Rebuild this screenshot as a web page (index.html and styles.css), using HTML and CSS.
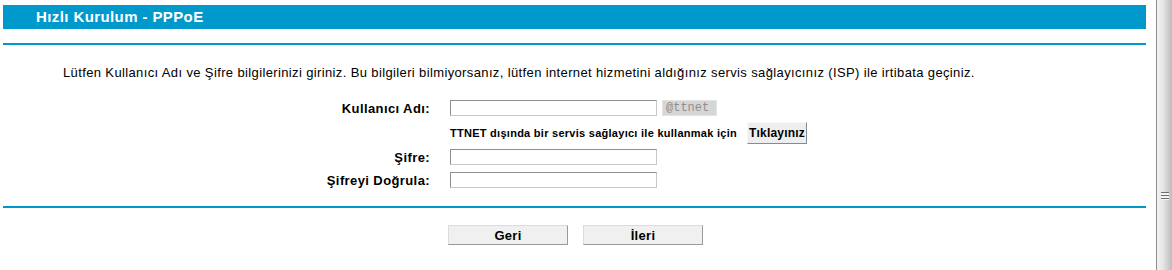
FILE: index.html
```html
<!DOCTYPE html>
<html lang="tr">
<head>
  <meta charset="UTF-8" />
  <title>Hızlı Kurulum - PPPoE</title>
  <link rel="stylesheet" href="styles.css">
</head>
<body>

  <div class="page">
    <div class="main">
      <div class="title-bar">Hızlı Kurulum - PPPoE</div>
      <div class="rule"></div>

      <p class="intro">Lütfen Kullanıcı Adı ve Şifre bilgilerinizi giriniz. Bu bilgileri bilmiyorsanız, lütfen internet hizmetini aldığınız servis sağlayıcınız (ISP) ile irtibata geçiniz.</p>

      <div class="form">
        <label class="label row-user">Kullanıcı Adı:</label>
        <div class="field row-user">
          <input class="text-input" type="text">
          <span class="suffix">@ttnet</span>
        </div>

        <div class="field row-isp">
          <span class="isp-note">TTNET dışında bir servis sağlayıcı ile kullanmak için</span>
          <button class="small-btn">Tıklayınız</button>
        </div>

        <label class="label row-pass">Şifre:</label>
        <div class="field row-pass">
          <input class="text-input" type="password">
        </div>

        <label class="label row-confirm">Şifreyi Doğrula:</label>
        <div class="field row-confirm">
          <input class="text-input" type="password">
        </div>
      </div>

      <div class="rule rule-bottom"></div>

      <div class="nav-buttons">
        <button class="nav-btn">Geri</button>
        <button class="nav-btn">İleri</button>
      </div>
    </div>

    <div class="scrollbar">
      <div class="grip"></div>
    </div>
  </div>

</body>
</html>
```

FILE: styles.css
```css
* {
  box-sizing: border-box;
}

body {
  margin: 0;
  padding: 0;
  height: 270px;
  overflow: hidden;
  background: #ffffff;
  font-family: 'Liberation Sans', Arial, sans-serif;
  color: #000000;
}

.page {
  display: flex;
  height: 270px;
}

.main {
  flex: 1;
  padding: 5px 10px 0 3px;
}

.title-bar {
  height: 24px;
  background: #0099cc;
  color: #ffffff;
  font-size: 15px;
  font-weight: bold;
  letter-spacing: 0.4px;
  line-height: 23px;
  padding-left: 33px;
}

.rule {
  height: 2px;
  margin-top: 14px;
  background: #0099cc;
}

.intro {
  margin: 21px 0 0 60px;
  font-size: 13px;
  letter-spacing: 0.37px;
  line-height: 14px;
  white-space: nowrap;
}

.form {
  display: grid;
  grid-template-columns: 427px auto;
  column-gap: 20px;
  align-items: center;
  margin-top: 20px;
}

.label {
  grid-column: 1;
  text-align: right;
  font-size: 13px;
  font-weight: bold;
  letter-spacing: 0.4px;
}

.field {
  grid-column: 2;
  display: flex;
  align-items: center;
}

.row-isp {
  margin-top: 6px;
}

.row-pass {
  margin-top: 5px;
}

.row-confirm {
  margin-top: 7px;
}

.text-input {
  width: 207px;
  height: 16px;
  margin: 0;
  padding: 0 2px;
  border: 1px solid #c8c8c8;
  border-top-color: #8f8f8f;
  border-left-color: #8f8f8f;
  font-size: 11px;
}

.suffix {
  width: 55px;
  height: 16px;
  margin-left: 5px;
  background: #d6d6d6;
  border: 1px solid #e4e4e4;
  color: #8e8e8e;
  font-family: 'Liberation Mono', 'Courier New', monospace;
  font-size: 12px;
  line-height: 14px;
  padding-left: 3px;
}

.isp-note {
  font-size: 11px;
  font-weight: bold;
  letter-spacing: 0.27px;
  white-space: nowrap;
}

.small-btn {
  width: 60px;
  height: 22px;
  margin-left: 10px;
  padding: 0;
  background: #eeeeee;
  border: 1px solid #f8f8f8;
  border-right-color: #8a8a8a;
  border-bottom-color: #8a8a8a;
  font-family: 'Liberation Sans', Arial, sans-serif;
  font-size: 12px;
  font-weight: bold;
  letter-spacing: 0.2px;
  color: #000000;
}

.rule-bottom {
  margin-top: 18px;
}

.nav-buttons {
  display: flex;
  justify-content: center;
  gap: 15px;
  margin-top: 17px;
  padding-left: 2px;
}

.nav-btn {
  width: 120px;
  height: 20px;
  padding: 0;
  background: #f0f0f0;
  border: 1px solid #dcdcdc;
  border-right-color: #9a9a9a;
  border-bottom-color: #9a9a9a;
  font-family: 'Liberation Sans', Arial, sans-serif;
  font-size: 13px;
  font-weight: bold;
  letter-spacing: 0.3px;
  color: #000000;
}

.scrollbar {
  width: 16px;
  height: 270px;
  display: flex;
  align-items: center;
  justify-content: center;
  padding-top: 122px;
  border-left: 1px solid #8c8c8c;
  background: linear-gradient(to right, #f2f2f2, #e6e6e6 40%, #c9c9c9 80%, #bdbdbd);
}

.grip {
  width: 8px;
  height: 8px;
  background: repeating-linear-gradient(to bottom, #6e6e6e 0, #6e6e6e 1px, #f4f4f4 1px, #f4f4f4 3px);
}
```
